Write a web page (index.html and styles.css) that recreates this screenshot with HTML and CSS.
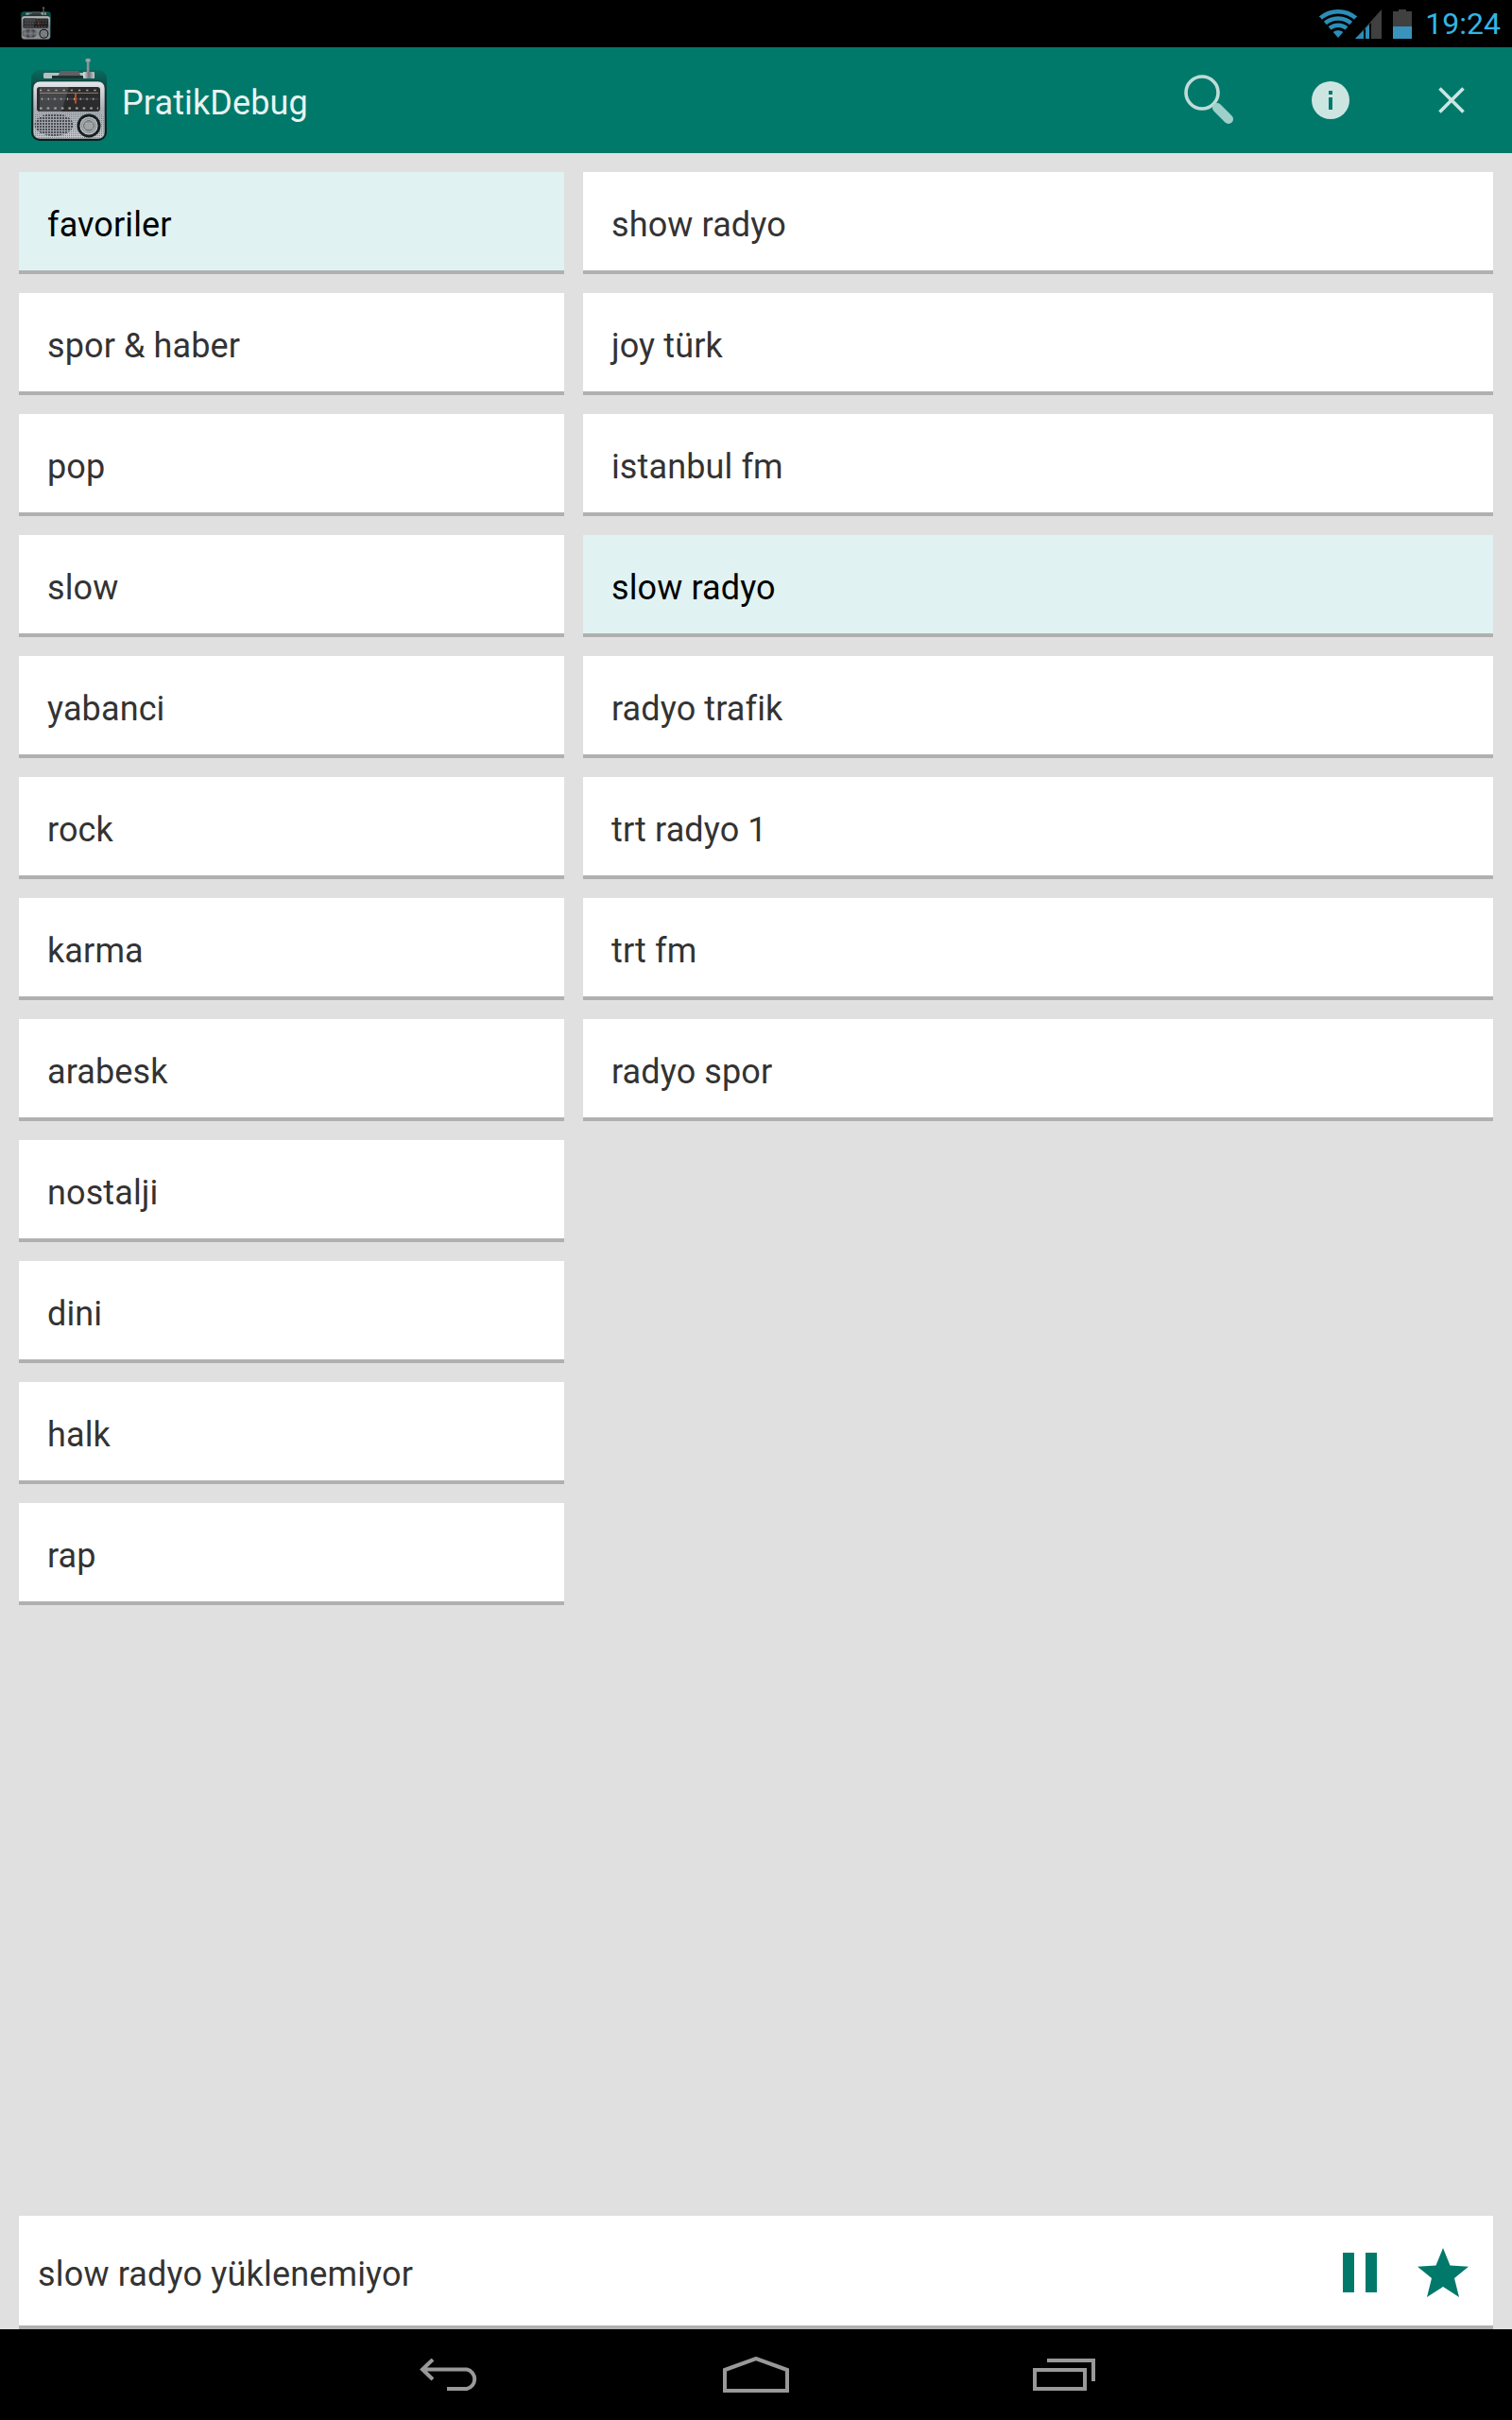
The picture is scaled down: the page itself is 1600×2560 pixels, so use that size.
FILE: index.html
```html
<!DOCTYPE html>
<html lang="tr">
<head>
<meta charset="utf-8">
<title>PratikDebug</title>
<link rel="stylesheet" href="styles.css">
</head>
<body>
<svg class="defs" width="0" height="0" aria-hidden="true">
  <defs>
    <linearGradient id="face" x1="0" y1="0" x2="0" y2="1"><stop offset="0" stop-color="#e6e8ec"/><stop offset="0.5" stop-color="#a9adb4"/><stop offset="1" stop-color="#c6c9ce"/></linearGradient>
    <linearGradient id="shell" x1="0" y1="0" x2="0" y2="1"><stop offset="0" stop-color="#0b6a5f"/><stop offset="0.3" stop-color="#04443e"/><stop offset="1" stop-color="#06211f"/></linearGradient>
    <linearGradient id="chrome" x1="0" y1="0" x2="1" y2="0"><stop offset="0" stop-color="#e4e6e8"/><stop offset="0.5" stop-color="#70757a"/><stop offset="1" stop-color="#c8cbce"/></linearGradient>
    <radialGradient id="knob"><stop offset="0" stop-color="#8f9296"/><stop offset="0.55" stop-color="#d4d6d8"/><stop offset="0.8" stop-color="#8a8d91"/><stop offset="1" stop-color="#e4e5e7"/></radialGradient>
    <pattern id="mesh" width="3" height="3" patternUnits="userSpaceOnUse"><rect width="3" height="3" fill="#a2a5ab"/><rect width="2" height="2" fill="#4a4d52"/></pattern>
    <pattern id="fine" width="2" height="2" patternUnits="userSpaceOnUse"><rect width="1" height="1" fill="#7d8188"/></pattern>
    <clipPath id="wifi-wedge"><path d="M20 30 L-1 6 V0 H41 V6 Z"/></clipPath>
    <symbol id="radio" viewBox="0 0 80 90">
      <rect x="0" y="13" width="80" height="75" rx="9" fill="url(#shell)"/>
      <rect x="13" y="16" width="54" height="6" rx="1.5" fill="#b9bcc0"/>
      <path d="M28 20 L31 14 H50 L53 20 Z" fill="#5d6166"/>
      <rect x="22" y="19" width="36" height="3" fill="#24302e"/>
      <rect x="58.8" y="3" width="2.6" height="13" fill="#8e9296"/>
      <rect x="57.5" y="1" width="5.2" height="3.6" rx="1.4" fill="#9da1a5"/>
      <rect x="55" y="15" width="12" height="7" rx="1" fill="url(#chrome)"/>
      <rect x="2" y="25" width="76" height="61" rx="7" fill="url(#face)" stroke="#0e1c1b" stroke-width="0.6"/>
      <rect x="3" y="58" width="74" height="27" rx="6" fill="url(#fine)"/>
      <rect x="6" y="31" width="67" height="26" rx="3" fill="#2b2b2d"/>
      <path d="M9 31 H40 L32 57 H9 Z" fill="#45464a"/>
      <path d="M9 37.4 H71" stroke="#b9a67a" stroke-width="0.7"/>
      <path d="M9 34.5 H71" stroke="#a8a8a0" stroke-width="1.4" stroke-dasharray="2.2 6"/>
      <path d="M9 43.8 H71" stroke="#77777a" stroke-width="0.5"/>
      <path d="M11 43.8 H71" stroke="#c4c4c4" stroke-width="2.4" stroke-dasharray="0.8 6"/>
      <path d="M9 53.5 H71" stroke="#a8a8a0" stroke-width="1.8" stroke-dasharray="2.6 5"/>
      <path d="M47 38 V48.5" stroke="#e4561a" stroke-width="1.6"/>
      <ellipse cx="24" cy="71" rx="20.5" ry="12" fill="url(#mesh)"/>
      <circle cx="61" cy="72" r="12.5" fill="#14211f"/>
      <circle cx="61" cy="72" r="9.5" fill="url(#knob)"/>
      <circle cx="61" cy="72" r="5.5" fill="#8f9296" stroke="#5b5e62" stroke-width="0.8"/>
      <path d="M56.5 72 H65.5 M57 69.8 H65 M57 74.2 H65" stroke="#c9cbce" stroke-width="0.7"/>
    </symbol>
  </defs>
</svg>
<div class="screen">
  <header class="status">
    <svg class="notif-icon"><use href="#radio"/></svg>
    <div class="status-right">
      <svg class="wifi" viewBox="0 0 40 30"><g clip-path="url(#wifi-wedge)" fill="none" stroke="#2b8db8" stroke-width="4.6"><circle cx="20" cy="31" r="28.7"/><circle cx="20" cy="31" r="21.5"/><circle cx="20" cy="31" r="14.3"/><circle cx="20" cy="31" r="4.5" stroke-width="9"/></g></svg>
      <svg class="signal" viewBox="0 0 28 31"><path d="M28 0 V31 H0 Z" fill="#404040"/><path d="M9 22.2 V31 H0 Z M11 20 L15 16 V31 H11 Z" fill="#2b8db8"/><path d="M9 22 L11 20 V31 H9 Z M15 16 L17 14 V31 H15 Z" fill="#000"/></svg>
      <svg class="battery" viewBox="0 0 20 31"><path d="M6 0 H14 V2 H20 V31 H0 V2 H6 Z" fill="#404040"/><rect y="18" width="20" height="13" fill="#3893bd"/></svg>
      <span class="time">19:24</span>
    </div>
  </header>
  <div class="appbar">
    <svg class="app-icon"><use href="#radio"/></svg>
    <h1 class="app-title">PratikDebug</h1>
    <div class="actions">
      <button class="action"><svg class="search" viewBox="0 0 54 54"><circle cx="19" cy="19" r="17" fill="none" stroke="#bfdcd7" stroke-width="3.6"/><path d="M35 35 L47 47" stroke="#9ed0c9" stroke-width="10" stroke-linecap="round"/></svg></button>
      <button class="action"><svg class="info" viewBox="0 0 40 40"><circle cx="20" cy="20" r="20" fill="#cde5e1"/><rect x="18" y="10" width="4" height="4" fill="#00796b"/><rect x="18" y="17" width="4" height="13" fill="#00796b"/></svg></button>
      <button class="action"><svg class="close" viewBox="0 0 28 28"><path d="M1.5 1.5 L26.5 26.5 M26.5 1.5 L1.5 26.5" stroke="#cde5e1" stroke-width="3.6"/></svg></button>
    </div>
  </div>
  <main class="lists">
    <ul class="list">
      <li class="item selected">favoriler</li>
      <li class="item">spor &amp; haber</li>
      <li class="item">pop</li>
      <li class="item">slow</li>
      <li class="item">yabanci</li>
      <li class="item">rock</li>
      <li class="item">karma</li>
      <li class="item">arabesk</li>
      <li class="item">nostalji</li>
      <li class="item">dini</li>
      <li class="item">halk</li>
      <li class="item">rap</li>
    </ul>
    <ul class="list">
      <li class="item">show radyo</li>
      <li class="item">joy türk</li>
      <li class="item">istanbul fm</li>
      <li class="item selected">slow radyo</li>
      <li class="item">radyo trafik</li>
      <li class="item">trt radyo 1</li>
      <li class="item">trt fm</li>
      <li class="item">radyo spor</li>
    </ul>
  </main>
  <footer class="player">
    <span class="player-text">slow radyo yüklenemiyor</span>
    <div class="player-controls">
      <button class="control"><svg class="pause" viewBox="0 0 36 42"><rect width="12" height="42" fill="#00796b"/><rect x="24" width="12" height="42" fill="#00796b"/></svg></button>
      <button class="control"><svg class="star" viewBox="0 0 54 52"><path d="M27 0 L34.5 18.5 L54 19.8 L39 32 L44 52 L27 41 L10 52 L15 32 L0 19.8 L19.5 18.5 Z" fill="#00796b"/></svg></button>
    </div>
  </footer>
  <nav class="navbar">
    <button class="nav-btn nav-btn-back"><svg class="nav-back" viewBox="0 0 66 34"><path d="M14 1 L3 11.5 L14 22 M3 11.5 H50 A10.5 10.5 0 0 1 50 32 H29" fill="none" stroke="#999" stroke-width="4"/></svg></button>
    <button class="nav-btn"><svg class="nav-home" viewBox="0 0 70 38"><path d="M2 14 L35 2 L68 14 V36 H2 Z" fill="none" stroke="#999" stroke-width="4"/></svg></button>
    <button class="nav-btn"><svg class="nav-recent" viewBox="0 0 66 34"><rect x="2" y="12" width="53" height="20" fill="none" stroke="#999" stroke-width="4"/><path d="M15 2 H64 V24" fill="none" stroke="#999" stroke-width="4"/></svg></button>
  </nav>
</div>
</body>
</html>
```

FILE: styles.css
```css
* { box-sizing: border-box; }

html, body {
  margin: 0;
  padding: 0;
}

body {
  font-family: Roboto, "Liberation Sans", sans-serif;
  background: #e0e0e0;
}

.defs { display: block; height: 0; }

.screen {
  width: 1600px;
  height: 2560px;
  display: flex;
  flex-direction: column;
  overflow: hidden;
}

button {
  background: none;
  border: 0;
  padding: 0;
  display: flex;
  align-items: center;
  justify-content: center;
}

.status {
  height: 50px;
  background: #000;
  display: flex;
  align-items: center;
  justify-content: space-between;
  padding: 0 12px 0 22px;
  flex: none;
}

.notif-icon { width: 32px; height: 36px; opacity: .8; }

.status-right { display: flex; align-items: center; }

.wifi { width: 40px; height: 30px; }
.signal { width: 28px; height: 31px; margin-left: -2px; }
.battery { width: 20px; height: 31px; margin-left: 12px; }

.time {
  margin-left: 14px;
  color: #33b5e5;
  font-size: 32px;
  line-height: 50px;
}

.appbar {
  height: 112px;
  background: #00796b;
  display: flex;
  align-items: center;
  padding-left: 33px;
  flex: none;
}

.app-icon { width: 80px; height: 90px; }

.app-title {
  margin: 0 0 0 16px;
  padding-top: 5px;
  font-size: 36px;
  font-weight: 400;
  letter-spacing: .12px;
  color: #e8f3f1;
  flex: 1;
}

.actions { display: flex; }

.action { width: 128px; height: 112px; }

.search { width: 54px; height: 54px; }
.info { width: 40px; height: 40px; }
.close { width: 28px; height: 28px; }

.lists {
  flex: 1;
  display: grid;
  grid-template-columns: 577px 963px;
  column-gap: 20px;
  padding: 20px 20px 0;
  align-items: start;
}

.list {
  list-style: none;
  margin: 0;
  padding: 0;
  display: flex;
  flex-direction: column;
  gap: 20px;
}

.item {
  height: 108px;
  background: #fff;
  border-bottom: 4px solid #b0b0b0;
  padding: 8px 0 0 30px;
  display: flex;
  align-items: center;
  font-size: 36px;
  letter-spacing: .12px;
  color: #333;
}

.item.selected {
  background: #e0f2f1;
  color: #000;
}

.player {
  height: 120px;
  margin: 0 20px;
  background: #fff;
  border-bottom: 4px solid #b0b0b0;
  display: flex;
  align-items: center;
  justify-content: space-between;
  padding: 0 9px 0 20px;
  flex: none;
}

.player-text {
  padding-top: 8px;
  font-size: 36px;
  letter-spacing: .17px;
  color: #333;
}

.player-controls { display: flex; }

.control { width: 88px; height: 116px; padding-top: 3px; }

.pause { width: 36px; height: 42px; }
.star { width: 54px; height: 52px; }

.navbar {
  height: 96px;
  background: #000;
  display: flex;
  justify-content: center;
  flex: none;
}

.nav-btn { width: 326px; height: 96px; }

.nav-btn-back { padding-left: 6px; }

.nav-back { width: 66px; height: 34px; }
.nav-home { width: 70px; height: 38px; }
.nav-recent { width: 66px; height: 34px; }
```
